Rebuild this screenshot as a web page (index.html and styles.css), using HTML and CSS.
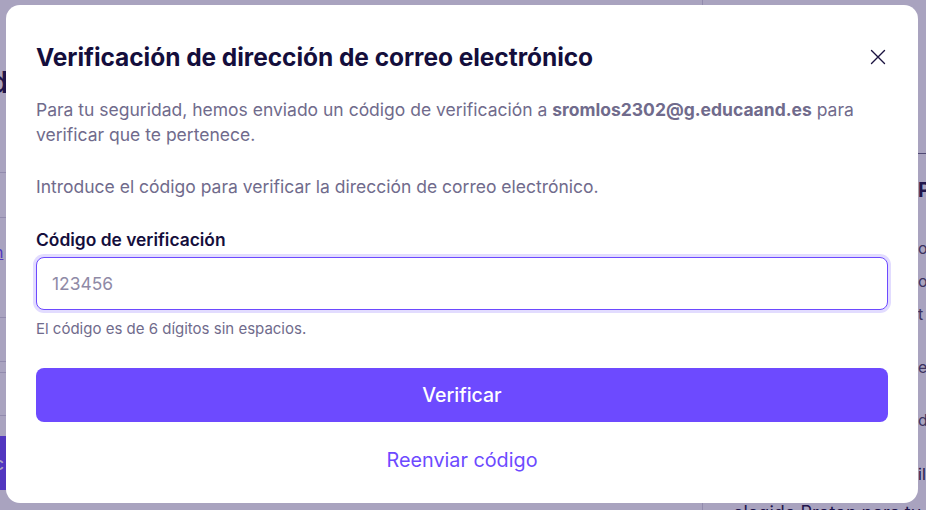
FILE: index.html
```html
<!DOCTYPE html>
<html lang="es">
<head>
<meta charset="utf-8">
<title>Verificación de dirección de correo electrónico</title>
<link rel="stylesheet" href="styles.css">
</head>
<body>
<div class="page">
  <div class="bg-left">
    <div class="bg-title">d</div>
    <div class="bg-rule rule-1"></div>
    <div class="bg-rule rule-2"></div>
    <a class="bg-link">n</a>
    <div class="bg-rule rule-3"></div>
    <div class="bg-rule rule-4"></div>
    <div class="bg-rule rule-5"></div>
    <div class="bg-rule rule-6"></div>
    <div class="bg-button">c</div>
  </div>
  <div class="bg-right">
    <div class="bg-strip">
      <div class="strip-rule"></div>
      <div class="strip-head">P</div>
      <div class="strip-line s1">o</div>
      <div class="strip-line s2">oc</div>
      <div class="strip-line s3">t</div>
      <div class="strip-line s4">e</div>
      <div class="strip-line s5">d</div>
      <div class="strip-line s6">il</div>
    </div>
    <div class="bg-bottom">elegido Proton para tu seguridad</div>
  </div>
</div>

<div class="backdrop"></div>

<div class="modal" role="dialog">
  <header class="modal-header">
    <h1 class="modal-title">Verificación de dirección de correo electrónico</h1>
    <button class="close-btn" aria-label="Cerrar">
      <svg width="18" height="18" viewBox="0 0 18 18"><path d="M2.5 2.5 L15.5 15.5 M15.5 2.5 L2.5 15.5" stroke="#1b1340" stroke-width="1.4" stroke-linecap="round" fill="none"/></svg>
    </button>
  </header>
  <div class="modal-body">
    <p class="text">Para tu seguridad, hemos enviado un código de verificación a <strong>sromlos2302@g.educaand.es</strong> para verificar que te pertenece.</p>
    <p class="text">Introduce el código para verificar la dirección de correo electrónico.</p>
    <label class="label" for="code">Código de verificación</label>
    <div class="input-wrap">
      <input id="code" class="input" type="text" placeholder="123456">
    </div>
    <p class="hint">El código es de 6 dígitos sin espacios.</p>
  </div>
  <footer class="modal-footer">
    <button class="btn-primary">Verificar</button>
    <button class="btn-link">Reenviar código</button>
  </footer>
</div>
</body>
</html>
```

FILE: styles.css
```css
* { box-sizing: border-box; }

html, body {
  margin: 0;
  padding: 0;
  width: 926px;
  height: 510px;
  overflow: hidden;
  font-family: Inter, "Noto Sans", sans-serif;
}

.page {
  display: grid;
  grid-template-columns: 702px 224px;
  height: 510px;
  background: #ffffff;
  color: #1b1340;
}

/* background page (mostly hidden by the modal) */
.bg-left {
  display: flex;
  flex-direction: column;
}
.bg-title {
  font-size: 30px;
  font-weight: 700;
  line-height: 36px;
  margin-top: 64px;
  margin-left: -10px;
}
.bg-rule {
  height: 1px;
  background: #d9d7e2;
}
.rule-1 { margin-top: 72px; }
.rule-2 { margin-top: 44px; }
.bg-link {
  margin-top: 24px;
  font-size: 16px;
  line-height: 20px;
  color: #6d4aff;
  text-decoration: underline;
  margin-left: -6px;
}
.rule-3 { margin-top: 55px; }
.rule-4 { margin-top: 43px; }
.rule-5 { margin-top: 10px; }
.rule-6 { margin-top: 42px; }
.bg-button {
  margin-top: 20px;
  height: 54px;
  width: 120px;
  margin-left: -60px;
  background: #6d4aff;
  color: #fff;
  border-radius: 0 8px 8px 0;
  display: flex;
  align-items: center;
  justify-content: flex-end;
  padding-right: 56px;
  font-size: 18px;
}

.bg-right {
  border-left: 1px solid #d9d7e2;
  display: grid;
  grid-template-columns: 215px 1fr;
  grid-template-rows: 1fr auto;
}
.bg-strip {
  grid-column: 2;
  grid-row: 1;
  display: flex;
  flex-direction: column;
  font-size: 16px;
  line-height: 20px;
  color: #4a4560;
}
.strip-rule {
  height: 1px;
  background: #6c6a80;
  margin-top: 153px;
}
.strip-head {
  margin-top: 24px;
  font-size: 20px;
  font-weight: 700;
  line-height: 24px;
  color: #1b1340;
}
.strip-line { margin-top: 13px; }
.s1 { margin-top: 36px; }
.s4 { margin-top: 33px; }
.s5 { margin-top: 33px; }
.s6 { margin-top: 34px; color: #1b1340; }

.bg-bottom {
  grid-column: 1 / 3;
  grid-row: 2;
  padding-left: 30px;
  font-size: 18px;
  line-height: 22px;
  margin-bottom: -14px;
  color: #1b1340;
  white-space: nowrap;
  overflow: hidden;
}

/* overlay */
.backdrop {
  position: fixed;
  inset: 0;
  background: rgba(40, 25, 95, 0.4);
}

.modal {
  position: fixed;
  left: 6px;
  top: 5px;
  width: 912px;
  height: 498px;
  background: #ffffff;
  border-radius: 14px;
  padding: 0 30px;
  display: flex;
  flex-direction: column;
}

.modal-header {
  display: flex;
  align-items: center;
  justify-content: space-between;
  padding-top: 36px;
}
.modal-title {
  margin: 0;
  font-size: 24.5px;
  line-height: 32px;
  font-weight: 700;
  color: #140e3c;
  letter-spacing: -0.05px;
}
.close-btn {
  width: 32px;
  height: 32px;
  border: 0;
  padding: 0;
  background: transparent;
  display: flex;
  align-items: center;
  justify-content: center;
  margin-right: -6px;
}

.modal-body {
  padding-top: 24px;
}
.text {
  margin: 0 0 27px;
  font-size: 17.5px;
  line-height: 25px;
  color: #706b8c;
}
.text strong {
  font-weight: 700;
  color: #706b8c;
}
.label {
  display: block;
  font-size: 17.4px;
  line-height: 24px;
  font-weight: 600;
  color: #140e3c;
  margin: 0;
  padding-top: 2px;
}
.input-wrap {
  margin-top: 5px;
}
.input {
  display: block;
  width: 100%;
  height: 53px;
  border: 1px solid #6d4aff;
  border-radius: 8px;
  box-shadow: 0 0 0 3px #e2dcff;
  padding: 0 15px;
  font-family: inherit;
  font-size: 17.4px;
  color: #1b1340;
  outline: none;
}
.input::placeholder {
  color: #8f8aa6;
}
.hint {
  margin: 10px 0 0;
  font-size: 15px;
  line-height: 18px;
  color: #706b8c;
}

.modal-footer {
  display: flex;
  flex-direction: column;
  align-items: stretch;
  padding-top: 30px;
}
.btn-primary {
  height: 54px;
  border: 0;
  border-radius: 8px;
  background: #6d4aff;
  color: #ffffff;
  font-family: inherit;
  font-size: 19.5px;
  font-weight: 500;
}
.btn-link {
  margin-top: 23px;
  height: 30px;
  border: 0;
  background: transparent;
  color: #6d4aff;
  font-family: inherit;
  font-size: 19.8px;
}
```
